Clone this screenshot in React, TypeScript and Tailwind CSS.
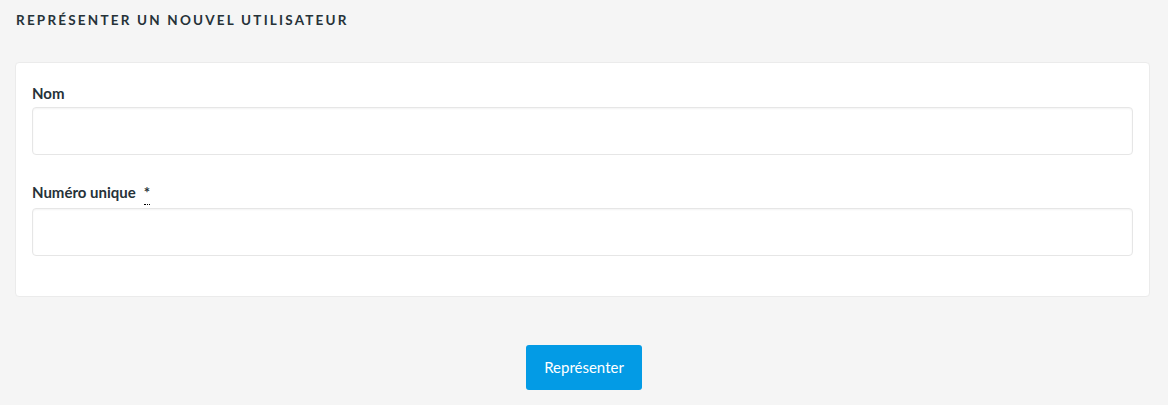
export default function App() {
  return (
    <div className="min-h-[405px] bg-[#f5f5f5] px-[15px] pt-[11px] pb-[15px] font-['Lato',sans-serif] text-[#263238]">
      {/* Page title */}
      <h1 className="pl-px text-[13.5px] font-bold uppercase leading-[18px] tracking-[2.2px]">
        Représenter un nouvel utilisateur
      </h1>

      {/* Form card */}
      <div className="mt-[33px] mr-[3px] rounded-[4px] border border-[#ebebeb] bg-white px-4 pt-[20px] pb-10">
        <div className="flex flex-col">
          <label className="text-[15px] font-bold leading-[20px]">Nom</label>
          <input
            type="text"
            className="mt-[4px] h-[48px] w-full rounded-[4px] border border-[#e6e6e6] shadow-[inset_0_1px_2px_rgba(0,0,0,0.05)] outline-none"
          />
        </div>

        <div className="mt-[27px] flex flex-col">
          <label className="text-[15px] font-bold leading-[20px]">
            Numéro unique
            <abbr title="requis" className="ml-[8px] inline-block cursor-help border-b border-dotted border-black pb-[4px] leading-[16px] no-underline">
              *
            </abbr>
          </label>
          <input
            type="text"
            className="mt-[3px] h-[48px] w-full rounded-[4px] border border-[#e6e6e6] shadow-[inset_0_1px_2px_rgba(0,0,0,0.05)] outline-none"
          />
        </div>
      </div>

      {/* Submit */}
      <div className="mt-12 flex justify-center">
        <button className="h-[45px] w-[116px] rounded-[3px] bg-[#039be5] text-[15px] text-white">
          Représenter
        </button>
      </div>
    </div>
  );
}
